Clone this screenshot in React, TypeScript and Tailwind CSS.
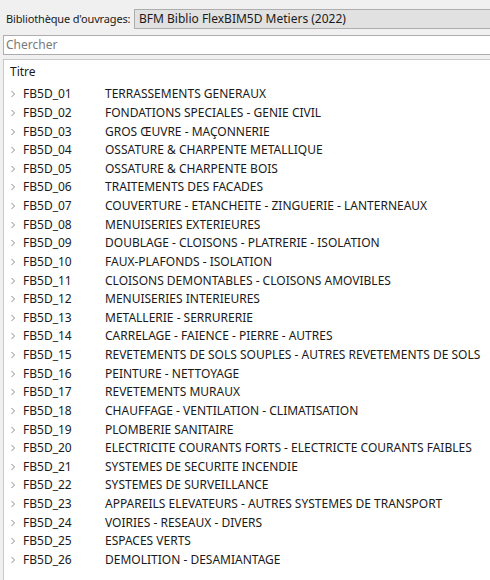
const rows: [string, string][] = [
  ['FB5D_01', 'TERRASSEMENTS GENERAUX'],
  ['FB5D_02', 'FONDATIONS SPECIALES - GENIE CIVIL'],
  ['FB5D_03', 'GROS ŒUVRE - MAÇONNERIE'],
  ['FB5D_04', 'OSSATURE & CHARPENTE METALLIQUE'],
  ['FB5D_05', 'OSSATURE & CHARPENTE BOIS'],
  ['FB5D_06', 'TRAITEMENTS DES FACADES'],
  ['FB5D_07', 'COUVERTURE - ETANCHEITE - ZINGUERIE - LANTERNEAUX'],
  ['FB5D_08', 'MENUISERIES EXTERIEURES'],
  ['FB5D_09', 'DOUBLAGE - CLOISONS - PLATRERIE - ISOLATION'],
  ['FB5D_10', 'FAUX-PLAFONDS - ISOLATION'],
  ['FB5D_11', 'CLOISONS DEMONTABLES - CLOISONS AMOVIBLES'],
  ['FB5D_12', 'MENUISERIES INTERIEURES'],
  ['FB5D_13', 'METALLERIE - SERRURERIE'],
  ['FB5D_14', 'CARRELAGE - FAIENCE - PIERRE - AUTRES'],
  ['FB5D_15', 'REVETEMENTS DE SOLS SOUPLES - AUTRES REVETEMENTS DE SOLS'],
  ['FB5D_16', 'PEINTURE - NETTOYAGE'],
  ['FB5D_17', 'REVETEMENTS MURAUX'],
  ['FB5D_18', 'CHAUFFAGE - VENTILATION - CLIMATISATION'],
  ['FB5D_19', 'PLOMBERIE SANITAIRE'],
  ['FB5D_20', 'ELECTRICITE COURANTS FORTS - ELECTRICTE COURANTS FAIBLES'],
  ['FB5D_21', 'SYSTEMES DE SECURITE INCENDIE'],
  ['FB5D_22', 'SYSTEMES DE SURVEILLANCE'],
  ['FB5D_23', 'APPAREILS ELEVATEURS - AUTRES SYSTEMES DE TRANSPORT'],
  ['FB5D_24', 'VOIRIES - RESEAUX - DIVERS'],
  ['FB5D_25', 'ESPACES VERTS'],
  ['FB5D_26', 'DEMOLITION - DESAMIANTAGE'],
];

function Chevron() {
  return (
    <svg width="6" height="8" viewBox="0 0 6 8" className="shrink-0">
      <path d="M1.5 1 L4.5 4 L1.5 7" fill="none" stroke="#8a8a8a" strokeWidth="1" />
    </svg>
  );
}

export default function App() {
  return (
    <div
      className="w-[490px] h-[580px] overflow-hidden bg-[#f0f0f0] text-[12px] text-[#1a1a1a] flex flex-col"
      style={{ fontFamily: '"Noto Sans", "Open Sans", sans-serif' }}
    >
      <div className="flex items-center pt-[9px] pl-[6px]">
        <span className="w-[128px] shrink-0 whitespace-nowrap text-[11px] tracking-[-0.15px] leading-[20px]">
          Bibliothèque d'ouvrages:
        </span>
        <div className="flex-1 h-[20px] bg-[#e1e1e1] border border-r-0 border-[#adadad] pl-[4px] flex items-center whitespace-nowrap">
          BFM Biblio FlexBIM5D Metiers (2022)
        </div>
      </div>
      <div className="mt-[6px] ml-[3px] h-[20px] bg-white border border-r-0 border-[#adadad] pl-[2px] flex items-center text-[#7a7a7a]">
        Chercher
      </div>
      <div className="mt-[4px] ml-[3px] flex-1 bg-white border border-r-0 border-b-0 border-[#c8c8c8] flex flex-col">
        <div className="h-[25px] pl-[6px] pt-[2px] leading-[20px]">Titre</div>
        {rows.map(([id, title]) => (
          <div key={id} className="h-[18.64px] flex items-center whitespace-nowrap">
            <div className="w-[19px] pl-[6px] flex items-center">
              <Chevron />
            </div>
            <span className="w-[82px] shrink-0">{id}</span>
            <span>{title}</span>
          </div>
        ))}
      </div>
    </div>
  );
}
